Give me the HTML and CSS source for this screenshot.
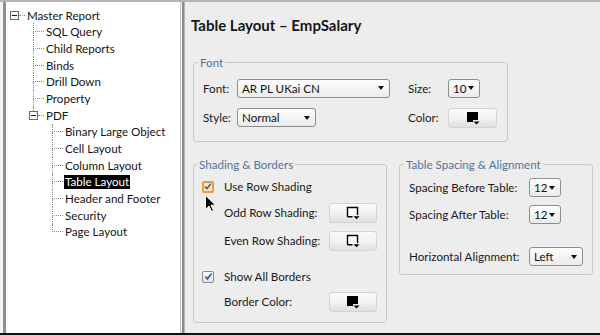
FILE: index.html
```html
<!DOCTYPE html>
<html>
<head>
<meta charset="utf-8">
<title>Table Layout - EmpSalary</title>
<link rel="stylesheet" href="styles.css">
</head>
<body>
<div class="frame">
  <div class="edge"></div>
  <div class="tree">
    <div class="row">
      <svg class="tbox" width="9" height="9" viewBox="0 0 9 9"><rect x=".5" y=".5" width="8" height="8" fill="#fff" stroke="#6a6a6a"/><path d="M2 4.5h5" stroke="#111"/></svg>
      <span class="hconn"></span><span class="lbl">Master Report</span>
    </div>
    <div class="kids kids1">
      <div class="row"><span class="elbow"><i class="up"></i><i class="down"></i></span><span class="lbl">SQL Query</span></div>
      <div class="row"><span class="elbow"><i class="up"></i><i class="down"></i></span><span class="lbl">Child Reports</span></div>
      <div class="row"><span class="elbow"><i class="up"></i><i class="down"></i></span><span class="lbl">Binds</span></div>
      <div class="row"><span class="elbow"><i class="up"></i><i class="down"></i></span><span class="lbl">Drill Down</span></div>
      <div class="row"><span class="elbow"><i class="up"></i><i class="down"></i></span><span class="lbl">Property</span></div>
      <div class="row">
        <span class="node"><i class="stub"></i><svg class="tbox" width="9" height="9" viewBox="0 0 9 9"><rect x=".5" y=".5" width="8" height="8" fill="#fff" stroke="#6a6a6a"/><path d="M2 4.5h5" stroke="#111"/></svg></span>
        <span class="hconn"></span><span class="lbl">PDF</span>
      </div>
    </div>
    <div class="kids kids2">
      <div class="row"><span class="elbow"><i class="up"></i><i class="down"></i></span><span class="lbl">Binary Large Object</span></div>
      <div class="row"><span class="elbow"><i class="up"></i><i class="down"></i></span><span class="lbl">Cell Layout</span></div>
      <div class="row"><span class="elbow"><i class="up"></i><i class="down"></i></span><span class="lbl">Column Layout</span></div>
      <div class="row"><span class="elbow"><i class="up"></i><i class="down"></i></span><span class="lbl sel">Table Layout</span></div>
      <div class="row"><span class="elbow"><i class="up"></i><i class="down"></i></span><span class="lbl">Header and Footer</span></div>
      <div class="row"><span class="elbow"><i class="up"></i><i class="down"></i></span><span class="lbl">Security</span></div>
      <div class="row last"><span class="elbow"><i class="up"></i><i class="down"></i></span><span class="lbl">Page Layout</span></div>
    </div>
  </div>
  <div class="divider"></div>
  <div class="main">
    <h1 class="title">Table Layout – EmpSalary</h1>
    <fieldset class="grp font-grp">
      <legend>Font</legend>
      <div class="font-grid">
        <span class="lab">Font:</span>
        <span class="combo w-font">AR PL UKai CN<i class="arr"></i></span>
        <span class="lab">Size:</span>
        <span class="combo w-size">10<i class="arr"></i></span>
        <span class="lab">Style:</span>
        <span class="combo w-style">Normal<i class="arr"></i></span>
        <span class="lab">Color:</span>
        <span class="cbtn w-color">
          <svg width="14" height="14" viewBox="0 0 14 14"><path d="M1 1h11v8h-5v2H1z" fill="#000"/><path d="M7.5 10.5h6l-3 3z" fill="#000"/></svg>
        </span>
      </div>
    </fieldset>
    <div class="lower">
      <fieldset class="grp shade">
        <legend>Shading &amp; Borders</legend>
        <div class="srow chkrow">
          <span class="chk focus"><svg width="9" height="9" viewBox="0 0 9 9"><path d="M1.3 4.6l2.1 2.3 4.2-5.4" fill="none" stroke="#2b62b5" stroke-width="1.8"/></svg></span>
          <span class="lab">Use Row Shading</span>
          <svg class="cursor" width="11" height="17" viewBox="0 0 11 17"><path d="M.5.5v14l3.5-3.4 2.6 5.4 2-1-2.6-5.3h4.6z" fill="#000" stroke="#fff" stroke-width="1"/></svg>
        </div>
        <div class="srow btnrow">
          <span class="lab">Odd Row Shading:</span>
          <span class="cbtn w-sbtn"><svg width="14" height="14" viewBox="0 0 14 14"><path d="M1.5 10.8V1.5h10v7.5M1.5 10.8h5" fill="#fff" stroke="#000" stroke-width="1.4"/><path d="M7.5 10.3h6l-3 3z" fill="#000"/></svg></span>
        </div>
        <div class="srow btnrow r3">
          <span class="lab">Even Row Shading:</span>
          <span class="cbtn w-sbtn"><svg width="14" height="14" viewBox="0 0 14 14"><path d="M1.5 10.8V1.5h10v7.5M1.5 10.8h5" fill="#fff" stroke="#000" stroke-width="1.4"/><path d="M7.5 10.3h6l-3 3z" fill="#000"/></svg></span>
        </div>
        <div class="srow chkrow r4">
          <span class="chk"><svg width="9" height="9" viewBox="0 0 9 9"><path d="M1.3 4.6l2.1 2.3 4.2-5.4" fill="none" stroke="#2b62b5" stroke-width="1.8"/></svg></span>
          <span class="lab">Show All Borders</span>
        </div>
        <div class="srow btnrow r5">
          <span class="lab">Border Color:</span>
          <span class="cbtn w-sbtn"><svg width="14" height="14" viewBox="0 0 14 14"><path d="M1 1h11v8h-5v2H1z" fill="#000"/><path d="M7.5 10.5h6l-3 3z" fill="#000"/></svg></span>
        </div>
      </fieldset>
      <fieldset class="grp spacing">
        <legend>Table Spacing &amp; Alignment</legend>
        <div class="prow">
          <span class="lab plab">Spacing Before Table:</span>
          <span class="combo w-size">12<i class="arr"></i></span>
        </div>
        <div class="prow p2">
          <span class="lab plab">Spacing After Table:</span>
          <span class="combo w-size">12<i class="arr"></i></span>
        </div>
        <div class="prow p3">
          <span class="lab plab">Horizontal Alignment:</span>
          <span class="combo w-left">Left<i class="arr"></i></span>
        </div>
      </fieldset>
    </div>
  </div>
</div>
</body>
</html>
```
FILE: styles.css
```css
* { box-sizing: border-box; }

body {
  margin: 0;
  background: #fff;
  font-family: "Lato", "Liberation Sans", sans-serif;
  font-size: 11.6px;
  color: #1e1e1e;
}

.frame {
  width: 600px;
  height: 335px;
  display: flex;
  border-top: 2px solid #b4b4b4;
  border-bottom: 2px solid #111;
  overflow: hidden;
}

.edge {
  width: 6px;
  flex: none;
  background: linear-gradient(to right, #f4f4f4 3px, #8e8e8e 3px);
}

.tree {
  width: 175px;
  flex: none;
  background: #fff;
  border-right: 1px solid #c6c6c6;
  padding: 4.7px 0 0 4px;
}

.divider {
  width: 4px;
  flex: none;
  background: linear-gradient(to right, #f2f2f2 1px, #8a8a8a 1px, #8a8a8a 3px, #b5b5b5 3px);
}

.main {
  flex: 1;
  background: #ededed;
  padding: 14px 0 0 8px;
}

/* tree */
.row {
  height: 16.7px;
  display: flex;
  align-items: center;
  white-space: nowrap;
}

.kids1 { margin-left: 23px; }
.kids2 { margin-left: 42px; }

.tbox { flex: none; display: block; }

.hconn {
  width: 6px;
  height: 0;
  border-top: 1px dotted #8c8c8c;
  flex: none;
}

.lbl { margin-left: 2px; color: #151515; }

.elbow {
  width: 11px;
  height: 100%;
  display: flex;
  flex-direction: column;
  flex: none;
}

.elbow i { display: block; flex: 1; }
.elbow .up { border-left: 1px dotted #8c8c8c; border-bottom: 1px dotted #8c8c8c; }
.elbow .down { border-left: 1px dotted #8c8c8c; }
.row.last .elbow .down { border-left: none; }

.node {
  width: 9px;
  height: 100%;
  margin-left: -4px;
  display: flex;
  flex-direction: column;
  flex: none;
}

.node .stub {
  display: block;
  height: 3.85px;
  width: 0;
  margin-left: 4px;
  border-left: 1px dotted #8c8c8c;
}

.sel {
  margin-left: 1px;
  padding: 0 1px;
  background: #000;
  color: #fff;
  line-height: 14px;
}

/* main panel */
.title {
  margin: 0 0 0 -2px;
  font-size: 15px;
  font-weight: 700;
  line-height: 18px;
  height: 18px;
  color: #161616;
}

.grp {
  margin: 0;
  border: 1px solid #c9c9c9;
  border-radius: 3px;
  padding: 9.5px 9px 13px 9px;
  min-width: 0;
}

.grp legend {
  padding: 0 2px;
  margin-left: -5px;
  color: #52749a;
  font-size: 11.6px;
  line-height: 13px;
}

.font-grp {
  width: 315px;
  margin-top: 22px;
}

.font-grid {
  display: grid;
  grid-template-columns: 34px 171px 40px auto;
  grid-template-rows: 19px 20px;
  row-gap: 10px;
  align-items: center;
}

.lab { color: #1a1a1a; white-space: nowrap; }

.combo {
  height: 19px;
  display: flex;
  align-items: center;
  justify-content: space-between;
  padding: 0 5px 0 4px;
  border: 1px solid #8e8e8e;
  border-radius: 3px;
  background: linear-gradient(#fefefe, #ebebeb);
  color: #111;
}

.arr {
  display: block;
  width: 0;
  height: 0;
  border-left: 3.5px solid transparent;
  border-right: 3.5px solid transparent;
  border-top: 4px solid #111;
}

.w-font { width: 153px; }
.w-size { width: 32px; }
.w-style { width: 79px; }
.w-left { width: 54px; }

.cbtn {
  height: 20px;
  display: flex;
  align-items: center;
  justify-content: center;
  border: 1px solid #d4d4d4;
  border-radius: 3px;
  background: linear-gradient(#fafafa 0%, #f2f2f2 50%, #e0e0e0 100%);
}

.w-color { width: 49px; }
.w-sbtn { width: 48px; }

.lower {
  display: flex;
  gap: 12px;
  align-items: flex-start;
  margin-top: 16px;
}

.shade {
  width: 194px;
  padding: 8px 8px 10px 8px;
}

.spacing {
  width: 194px;
  padding: 7.5px 9px 8px 9px;
}

.srow {
  display: flex;
  align-items: center;
}

.chkrow {
  height: 16px;
  gap: 10px;
  position: relative;
}

.btnrow {
  height: 20px;
  padding-left: 22px;
  margin-top: 8px;
}

.btnrow .lab { width: 105px; }

.r4 { margin-top: 18px; }
.r5 { margin-top: 7px; }

.chk {
  width: 12px;
  height: 12px;
  flex: none;
  display: flex;
  align-items: center;
  justify-content: center;
  border: 1px solid #8a8a8a;
  border-radius: 2px;
  background: linear-gradient(#fff, #e2e2e2);
}

.chk.focus {
  border: 2px solid #e3a13a;
  background: #fbe6b6;
}

.cursor {
  position: absolute;
  left: 3px;
  top: 16px;
}

.prow {
  display: flex;
  align-items: center;
  height: 19px;
}

.plab { width: 120px; }
.p2 { margin-top: 8px; }
.p3 { margin-top: 23px; }
```
